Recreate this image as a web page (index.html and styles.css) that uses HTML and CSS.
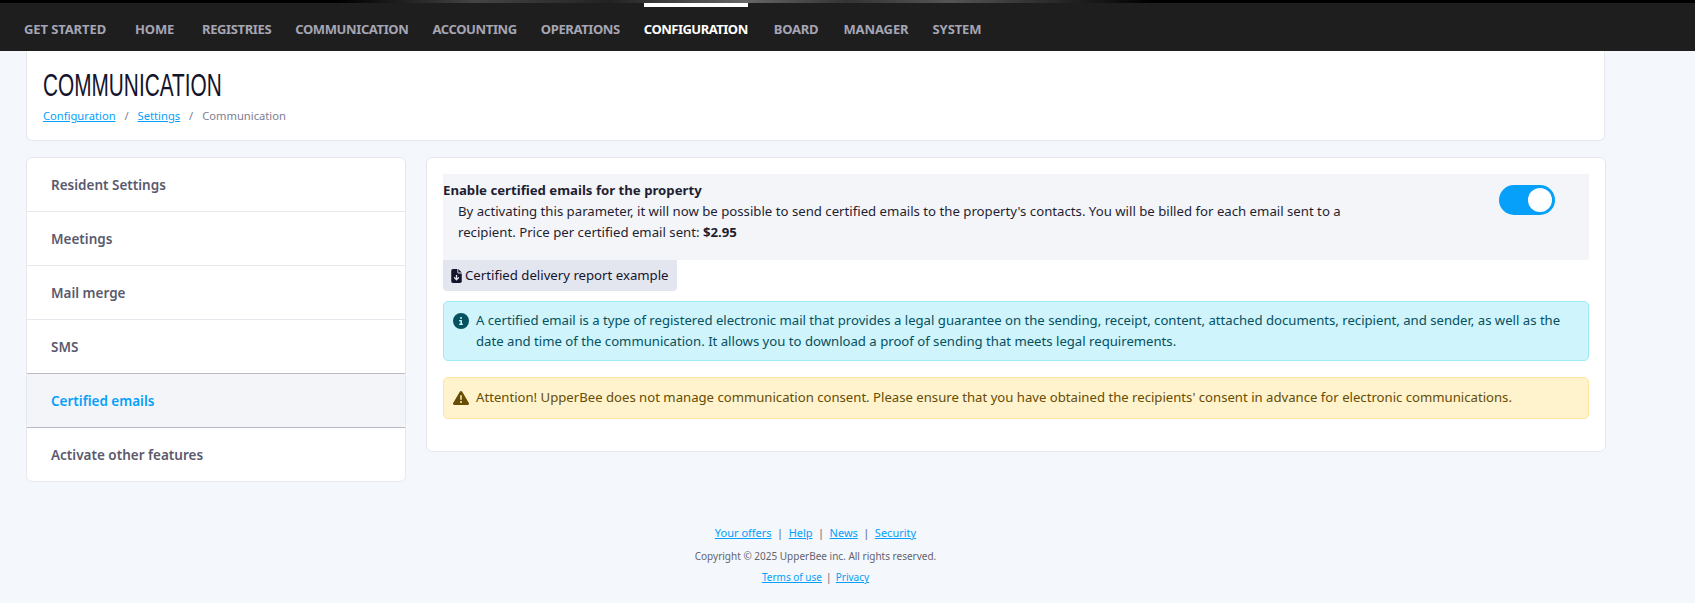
FILE: index.html
```html
<!DOCTYPE html>
<html lang="en">

<head>
  <meta charset="utf-8" />
  <title>Communication - UpperBee</title>
  <link rel="stylesheet" href="styles.css">
</head>

<body>
  <div class="top-strip"></div>

  <nav class="navbar">
    <a class="nav-link nav-link-first" href="#">GET STARTED</a>
    <a class="nav-link nav-link-wide" href="#">HOME</a>
    <a class="nav-link" href="#">REGISTRIES</a>
    <a class="nav-link" href="#">COMMUNICATION</a>
    <a class="nav-link" href="#">ACCOUNTING</a>
    <a class="nav-link" href="#">OPERATIONS</a>
    <a class="nav-link active" href="#">CONFIGURATION</a>
    <a class="nav-link nav-link-board" href="#">BOARD</a>
    <a class="nav-link nav-link-loose" href="#">MANAGER</a>
    <a class="nav-link nav-link-loose" href="#">SYSTEM</a>
  </nav>

  <div class="page">
    <header class="page-header">
      <h1 class="page-title">COMMUNICATION</h1>
      <div class="breadcrumb">
        <a href="#">Configuration</a>
        <span class="sep">/</span>
        <a href="#">Settings</a>
        <span class="sep">/</span>
        <span>Communication</span>
      </div>
    </header>

    <div class="columns">
      <!-- menu de gauche -->
      <ul class="side-menu">
        <li class="side-item">Resident Settings</li>
        <li class="side-item">Meetings</li>
        <li class="side-item">Mail merge</li>
        <li class="side-item">SMS</li>
        <li class="side-item selected">Certified emails</li>
        <li class="side-item">Activate other features</li>
      </ul>

      <main class="content">
        <section class="option">
          <div class="option-text">
            <div class="option-title">Enable certified emails for the property</div>
            <p class="option-desc">By activating this parameter, it will now be possible to send certified emails to the property's contacts. You will be billed for each email sent to a recipient. Price per certified email sent: <b>$2.95</b></p>
          </div>
          <span class="switch"><span class="knob"></span></span>
        </section>

        <a class="report-btn" href="#">
          <svg class="icon-file" viewBox="0 0 384 512"><path d="M64 0C28.7 0 0 28.7 0 64V448c0 35.3 28.7 64 64 64H320c35.3 0 64-28.7 64-64V160H256c-17.7 0-32-14.3-32-32V0H64zM256 0V128H384L256 0zM216 232V334.1l31-31c9.4-9.4 24.6-9.4 33.9 0s9.4 24.6 0 33.9l-72 72c-9.4 9.4-24.6 9.4-33.9 0l-72-72c-9.4-9.4-9.4-24.6 0-33.9s24.6-9.4 33.9 0l31 31V232c0-13.3 10.7-24 24-24s24 10.7 24 24z"/></svg>
          Certified delivery report example
        </a>

        <div class="alert alert-info">
          <svg class="alert-icon" viewBox="0 0 512 512"><path d="M256 512A256 256 0 1 0 256 0a256 256 0 1 0 0 512zM216 336h24V272H216c-13.3 0-24-10.7-24-24s10.7-24 24-24h48c13.3 0 24 10.7 24 24v88h8c13.3 0 24 10.7 24 24s-10.7 24-24 24H216c-13.3 0-24-10.7-24-24s10.7-24 24-24zm40-208a32 32 0 1 1 0 64 32 32 0 1 1 0-64z"/></svg>
          <div>A certified email is a type of registered electronic mail that provides a legal guarantee on the sending, receipt, content, attached documents, recipient, and sender, as well as the date and time of the communication. It allows you to download a proof of sending that meets legal requirements.</div>
        </div>

        <div class="alert alert-warning">
          <svg class="alert-icon" viewBox="0 0 512 512"><path d="M256 32c14.2 0 27.3 7.5 34.5 19.8l216 368c7.3 12.4 7.3 27.7 .2 40.1S486.3 480 472 480H40c-14.3 0-27.6-7.7-34.7-20.1s-7-27.8 .2-40.1l216-368C228.7 39.5 241.8 32 256 32zm0 128c-13.3 0-24 10.7-24 24V296c0 13.3 10.7 24 24 24s24-10.7 24-24V184c0-13.3-10.7-24-24-24zm32 224a32 32 0 1 0 -64 0 32 32 0 1 0 64 0z"/></svg>
          <div>Attention! UpperBee does not manage communication consent. Please ensure that you have obtained the recipients' consent in advance for electronic communications.</div>
        </div>
      </main>
    </div>

    <footer class="footer">
      <div class="footer-links">
        <a href="#">Your offers</a> <span class="bar">|</span>
        <a href="#">Help</a> <span class="bar">|</span>
        <a href="#">News</a> <span class="bar">|</span>
        <a href="#">Security</a>
      </div>
      <div class="copyright">Copyright © 2025 UpperBee inc. All rights reserved.</div>
      <div class="footer-legal">
        <a href="#">Terms of use</a> <span class="bar bar-small">|</span>
        <a href="#">Privacy</a>
      </div>
    </footer>
  </div>
</body>

</html>
```

FILE: styles.css
```css
body {
  margin: 0;
  background-color: #f4f7fb;
  color: #1e1e32;
  font-family: "Noto Sans", sans-serif;
  font-size: 13.2px;
  line-height: 21px;
}

a {
  color: #06a0fa;
}

.top-strip {
  height: 3px;
  background: linear-gradient(90deg, #000 0%, #000 20%, #444 28%, #222 36%, #666 44%, #333 50%, #555 56%, #000 68%);
}

.navbar {
  display: flex;
  height: 48px;
  padding-left: 12px;
  background-color: #1e1e1e;
}

.nav-link {
  display: flex;
  align-items: center;
  padding: 4px 12px 0;
  color: #a5a5b4;
  font-size: 13px;
  font-weight: 700;
  letter-spacing: -0.38px;
  text-decoration: none;
}

.nav-link-first {
  padding-right: 17px;
  letter-spacing: -0.1px;
}

.nav-link-wide {
  padding-right: 16px;
  letter-spacing: -0.2px;
}

.nav-link-board {
  padding-right: 13px;
  letter-spacing: -0.2px;
}

.nav-link-loose {
  letter-spacing: -0.1px;
}

.nav-link.active {
  position: relative;
  margin-right: 2px;
  color: white;
  letter-spacing: -0.5px;
}

.nav-link.active::before {
  content: "";
  position: absolute;
  top: 0;
  left: 12px;
  right: 12px;
  height: 4px;
  background-color: white;
}

.page {
  padding: 0 90px 0 26px;
}

.page-header {
  height: 90px;
  box-sizing: border-box;
  padding: 16px 16px 0;
  background-color: white;
  border: 1px solid #e6e8ee;
  border-top: 0;
  border-radius: 0 0 6px 6px;
}

.page-title {
  margin: 0;
  color: #14142d;
  font-family: "Liberation Sans", sans-serif;
  font-size: 32px;
  font-weight: normal;
  line-height: 36px;
  transform: scaleX(0.65);
  transform-origin: left;
}

.breadcrumb {
  margin-top: 2px;
  color: #7d7d91;
  font-size: 11.2px;
}

.sep {
  margin: 0 6px;
}

.columns {
  display: grid;
  grid-template-columns: 380px 1180px;
  gap: 20px;
  align-items: start;
  margin-top: 16px;
}

.side-menu {
  margin: 0;
  padding: 0;
  list-style: none;
  overflow: hidden;
  background-color: white;
  border: 1px solid #e6e8ee;
  border-radius: 6px;
}

.side-item {
  height: 52px;
  padding: 1px 0 0 24px;
  line-height: 53px;
  color: #5a5a6e;
  font-size: 13.5px;
  font-weight: 600;
  border-bottom: 1px solid #e6e8ee;
}

.side-item:last-child {
  border-bottom: 0;
}

.side-item.selected {
  color: #06a0fa;
  background-color: #f4f5f9;
  border-top: 1px solid #b9b9c8;
  border-bottom: 1px solid #b9b9c8;
  margin-top: -1px;
}

.content {
  height: 295px;
  box-sizing: border-box;
  padding: 16px;
  background-color: white;
  border: 1px solid #e6e8ee;
  border-radius: 6px;
}

.option {
  display: flex;
  justify-content: space-between;
  height: 86px;
  box-sizing: border-box;
  padding-top: 6px;
  background-color: #f4f5f9;
}

.option-title {
  font-weight: 700;
}

.option-desc {
  width: 890px;
  margin: 0;
  padding-left: 15px;
}

.switch {
  display: flex;
  justify-content: flex-end;
  align-items: center;
  width: 56px;
  height: 30px;
  box-sizing: border-box;
  margin: 5px 34px 0 0;
  padding-right: 3px;
  background-color: #06a0fa;
  border-radius: 15px;
}

.knob {
  width: 24px;
  height: 24px;
  background-color: white;
  border-radius: 50%;
}

.report-btn {
  display: inline-flex;
  align-items: center;
  gap: 3px;
  height: 31px;
  padding: 0 8px;
  color: #14142d;
  background-color: #e4e6ef;
  border-radius: 0 0 4px 4px;
  text-decoration: none;
}

.icon-file {
  width: 11px;
  height: 14px;
  fill: #14142d;
}

.alert {
  display: flex;
  gap: 7px;
  padding: 8px 8px 8px 9px;
  border: 1px solid;
  border-radius: 5px;
  font-size: 13.15px;
}

.alert-icon {
  flex: none;
  width: 16px;
  height: 16px;
  margin-top: 3px;
  fill: currentColor;
}

.alert-info {
  margin-top: 10px;
  color: #055160;
  background-color: #cff4fc;
  border-color: #9eeaf9;
}

.alert-warning {
  margin-top: 16px;
  padding-top: 9px;
  padding-bottom: 10px;
  color: #664d03;
  background-color: #fff3cd;
  border-color: #ffe69c;
}

.footer {
  margin-top: 40px;
  text-align: center;
  color: #64646e;
  font-size: 10px;
}

.footer-links {
  font-size: 11px;
}

.copyright {
  margin-top: 3px;
}

.bar {
  margin: 0 2.6px;
}

.bar-small {
  margin: 0 1.5px;
}
```
